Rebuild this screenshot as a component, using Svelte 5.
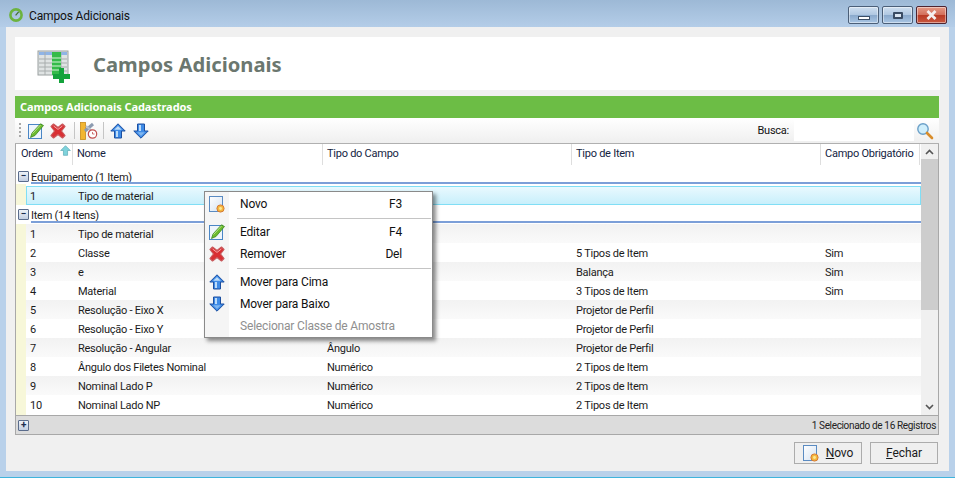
<script>
  const rows = [
    { n: 1, name: 'Tipo de material', campo: '', item: '', obr: '' },
    { n: 2, name: 'Classe', campo: '', item: '5 Tipos de Item', obr: 'Sim' },
    { n: 3, name: 'e', campo: '', item: 'Balança', obr: 'Sim' },
    { n: 4, name: 'Material', campo: '', item: '3 Tipos de Item', obr: 'Sim' },
    { n: 5, name: 'Resolução - Eixo X', campo: '', item: 'Projetor de Perfil', obr: '' },
    { n: 6, name: 'Resolução - Eixo Y', campo: '', item: 'Projetor de Perfil', obr: '' },
    { n: 7, name: 'Resolução - Angular', campo: 'Ângulo', item: 'Projetor de Perfil', obr: '' },
    { n: 8, name: 'Ângulo dos Filetes Nominal', campo: 'Numérico', item: '2 Tipos de Item', obr: '' },
    { n: 9, name: 'Nominal Lado P', campo: 'Numérico', item: '2 Tipos de Item', obr: '' },
    { n: 10, name: 'Nominal Lado NP', campo: 'Numérico', item: '2 Tipos de Item', obr: '' }
  ];
</script>

{#snippet pencil()}
  <svg width="16" height="16" viewBox="0 0 16 16">
    <rect x="0.5" y="1.5" width="13" height="14" fill="#eef5fc" stroke="#4a86c5"/>
    <path d="M2.5 14.5 L4 10 L12.5 0.8 L15.5 2.5 L7 12.5Z" fill="#6dbb2f" stroke="#2f7d17" stroke-width=".7"/>
    <path d="M4.5 10.5 L12.5 2" stroke="#b9e58c"/>
  </svg>
{/snippet}
{#snippet cross()}
  <svg width="16" height="16" viewBox="0 0 16 16">
    <path d="M3.5 1 L8 4.5 L12.5 1 L15 3.5 L11.5 8 L15 12.5 L12.5 15 L8 11.5 L3.5 15 L1 12.5 L4.5 8 L1 3.5Z" fill="#d92f33" stroke="#c9585b" stroke-width="1.2" stroke-linejoin="round"/>
    <path d="M3.6 3 L8 6.4 L12.4 3" fill="none" stroke="#f7b4b4" stroke-width=".9"/>
  </svg>
{/snippet}
{#snippet up()}
  <svg width="16" height="16" viewBox="0 0 16 16">
    <path d="M8 0.8 L15.2 8 L11.5 8 L11.5 15 L4.5 15 L4.5 8 L0.8 8Z" fill="#3f8be6" stroke="#1c4fa0" stroke-linejoin="round"/>
    <path d="M8 3 L11.8 6.8 L4.2 6.8Z" fill="#bcdcfa"/>
    <rect x="6" y="8" width="2" height="6" fill="#bcdcfa"/>
  </svg>
{/snippet}
{#snippet down()}
  <svg width="16" height="16" viewBox="0 0 16 16">
    <path d="M8 15.2 L15.2 8 L11.5 8 L11.5 1 L4.5 1 L4.5 8 L0.8 8Z" fill="#3f8be6" stroke="#1c4fa0" stroke-linejoin="round"/>
    <rect x="6" y="2" width="2" height="6" fill="#bcdcfa"/>
    <path d="M4.2 9.2 L11.8 9.2 L8 13Z" fill="#7fb6f0"/>
  </svg>
{/snippet}
{#snippet sunDoc()}
  <svg width="16" height="17" viewBox="0 0 16 17">
    <defs>
      <linearGradient id="docg" x1="0" y1="0" x2="1" y2="1"><stop offset="0" stop-color="#ffffff"/><stop offset="1" stop-color="#d4e2f2"/></linearGradient>
    </defs>
    <rect x="0.5" y="0.5" width="13" height="15" fill="url(#docg)" stroke="#5a8bc2"/>
    <circle cx="11.5" cy="12.5" r="3.6" fill="#f3b83e" stroke="#d87a33"/>
    <circle cx="11.5" cy="12.5" r="1.4" fill="#fde897"/>
  </svg>
{/snippet}

<div class="window">
  <header class="titlebar">
    <svg class="logo" width="14" height="14" viewBox="0 0 14 14">
      <circle cx="7" cy="7" r="5.6" fill="none" stroke="#6cb33f" stroke-width="2.6"/>
      <path d="M6.6 7.4 L9.6 3.8" stroke="#3f6e2a" stroke-width="1.2"/>
    </svg>
    <span class="wintitle">Campos Adicionais</span>
    <div class="winbtns">
      <div class="wb"><span class="min"></span></div>
      <div class="wb"><span class="max"></span></div>
      <div class="wb close">
        <svg width="13" height="10" viewBox="0 0 13 10"><path d="M2.5 1 L10.5 9 M10.5 1 L2.5 9" stroke="#f5efef" stroke-width="2.8"/></svg>
      </div>
    </div>
  </header>

  <div class="body">
    <section class="banner">
      <svg width="34" height="34" viewBox="0 0 34 34" class="bannericon">
        <rect x="1" y="1" width="30" height="24" fill="#dfe3e3" stroke="#9aa0a0"/>
        <rect x="2" y="2" width="28" height="3" fill="#8fb4e6"/>
        <path d="M2 9H30M2 13H30M2 17H30M2 21H30M8 2V25M24 2V25" stroke="#a8adad"/>
        <rect x="15" y="2" width="9" height="23" fill="#35bb4a"/>
        <path d="M15 8H24M15 12H24M15 16H24M15 20H24" stroke="#d6f2d8"/>
        <path d="M22 18H27V24H33V29H27V33H22V29H16V24H22Z" fill="#14a33c"/>
      </svg>
      <h1>Campos Adicionais</h1>
    </section>

    <section class="panel">
      <div class="ptitle">Campos Adicionais Cadastrados</div>
      <div class="toolbar">
        <span class="grip"></span>
        <span class="ic first">{@render pencil()}</span>
        <span class="ic">{@render cross()}</span>
        <span class="tsep"></span>
        <span class="ic tool">
          <svg width="18" height="18" viewBox="0 0 18 18">
            <rect x="0.5" y="0.5" width="5" height="17" fill="#f2b632" stroke="#c78a1a" stroke-width=".8"/>
            <path d="M5 9 L13 2" stroke="#8c9bb0" stroke-width="3"/>
            <path d="M6 4 L12 9" stroke="#b5c0cf" stroke-width="2"/>
            <circle cx="12.5" cy="12" r="4.2" fill="#fff" stroke="#c25050" stroke-width="1.2"/>
            <path d="M12.5 10V12H14.5" fill="none" stroke="#c25050" stroke-width=".8"/>
          </svg>
        </span>
        <span class="tsep second"></span>
        <span class="ic tool">{@render up()}</span>
        <span class="ic wide">{@render down()}</span>
        <span class="search">
          <label for="busca">Busca:</label>
          <input id="busca" type="text" />
          <svg width="18" height="18" viewBox="0 0 18 18">
            <circle cx="7" cy="7" r="5.2" fill="#cfeefb" stroke="#6a9fc8" stroke-width="1.4"/>
            <path d="M11 11 L16 16" stroke="#d98d2b" stroke-width="2.6" stroke-linecap="round"/>
          </svg>
        </span>
      </div>

      <div class="grid">
        <div class="gridmain">
          <div class="thead">
            <div class="c0">Ordem
              <svg class="sort" width="11" height="11" viewBox="0 0 16 16">
                <path d="M8 1 L15 8 L11 8 L11 15 L5 15 L5 8 L1 8Z" fill="#7fd3dc" stroke="#5aa9b5"/>
              </svg>
            </div>
            <div class="c1">Nome</div>
            <div class="c2">Tipo do Campo</div>
            <div class="c3">Tipo de Item</div>
            <div class="c4">Campo Obrigatório</div>
          </div>

          <div class="group g1">
            <span class="toggle">−</span><span class="gname">Equipamento (1 Item)</span>
          </div>
          <div class="row selected">
            <div class="num">1</div><div class="name">Tipo de material</div>
          </div>
          <div class="group g2">
            <span class="toggle">−</span><span class="gname">Item (14 Itens)</span>
          </div>
          {#each rows as r}
            <div class="row" class:alt={r.n % 2 === 1}>
              <div class="num">{r.n}</div>
              <div class="name">{r.name}</div>
              <div class="campo">{r.campo}</div>
              <div class="item">{r.item}</div>
              <div class="obr">{r.obr}</div>
            </div>
          {/each}
        </div>
        <div class="scroll">
          <div class="arrow"><svg width="9" height="6" viewBox="0 0 9 6"><path d="M1 5 L4.5 1.5 L8 5" fill="none" stroke="#555" stroke-width="1.6"/></svg></div>
          <div class="thumb"></div>
          <div class="arrow end"><svg width="9" height="6" viewBox="0 0 9 6"><path d="M1 1 L4.5 4.5 L8 1" fill="none" stroke="#555" stroke-width="1.6"/></svg></div>
        </div>
      </div>

      <div class="pfoot">
        <span class="toggle plus">+</span>
        <span class="count">1 Selecionado de 16 Registros</span>
      </div>
    </section>

    <div class="actions">
      <button class="btn">
        {@render sunDoc()}<span><u>N</u>ovo</span>
      </button>
      <button class="btn"><span><u>F</u>echar</span></button>
    </div>
  </div>

  <div class="menu">
    <div class="mi"><span class="mic">{@render sunDoc()}</span><span class="ml">Novo</span><span class="mk">F3</span></div>
    <div class="msep"></div>
    <div class="mi"><span class="mic">{@render pencil()}</span><span class="ml">Editar</span><span class="mk">F4</span></div>
    <div class="mi"><span class="mic">{@render cross()}</span><span class="ml">Remover</span><span class="mk">Del</span></div>
    <div class="msep"></div>
    <div class="mi"><span class="mic">{@render up()}</span><span class="ml">Mover para Cima</span></div>
    <div class="mi"><span class="mic">{@render down()}</span><span class="ml">Mover para Baixo</span></div>
    <div class="mi dis"><span class="mic"></span><span class="ml">Selecionar Classe de Amostra</span></div>
  </div>
</div>

<style>
  :global(body) { margin: 0; }
  .window {
    position: relative;
    width: 955px; height: 478px; box-sizing: border-box; overflow: hidden;
    display: flex; flex-direction: column;
    background: #b9d1ea;
    border-bottom: 1px solid #3fb4dc;
    font: 11px Roboto, "Noto Sans", sans-serif;
    letter-spacing: -.25px;
    color: #1b1b1b;
  }
  .titlebar {
    height: 27px; flex: none; display: flex; align-items: center; padding: 0 8px 0 9px;
    background: linear-gradient(#9db9d6, #b4cde8);
  }
  .logo { margin-right: 6px; margin-top: 2px; }
  .wintitle { font-size: 12px; letter-spacing: -.15px; color: #111; margin-top: 5px; }
  .winbtns { margin-left: auto; display: flex; gap: 3px; margin-top: 3px; }
  .wb {
    width: 29px; height: 16px; border: 1px solid #4b5f78; border-radius: 2px; display: flex; align-items: center; justify-content: center;
    background: linear-gradient(#cfdff0 0, #b0c8e2 48%, #8aa9cc 52%, #a9c6e4 100%);
    box-shadow: inset 0 0 0 1px rgba(255,255,255,.45);
  }
  .wb.close { background: linear-gradient(#e59a86 0, #d3705c 48%, #b93a25 52%, #c9583f 100%); border-color: #4e2430; }
  .min { width: 10px; height: 2px; background: #fff; border: 1px solid #3c4f66; margin-top: 6px; }
  .max { width: 6px; height: 3px; background: #dbe6f2; border: 2px solid #3a4c64; border-radius: 1px; }
  .body {
    flex: 1; margin: 0 6px 6px; background: #f0f0f0; padding: 10px 9px 7px;
    display: flex; flex-direction: column; min-height: 0;
  }
  .banner { height: 53px; flex: none; background: #fff; display: flex; align-items: center; }
  .bannericon { margin-left: 22px; margin-top: 6px; }
  h1 {
    margin: 0 0 0 22px; font: bold 20.2px "Noto Sans", "DejaVu Sans", sans-serif; letter-spacing: 0; color: #6b776f;
  }
  .panel { margin: 6px 1px 0 0; height: 339px; flex: none; display: flex; flex-direction: column; }
  .ptitle {
    height: 22px; flex: none; background: #6cbd45; color: #fff; font: bold 11px/21px "Noto Sans", sans-serif; letter-spacing: -.07px; padding-left: 5px;
  }
  .toolbar {
    height: 26px; flex: none; box-sizing: border-box; display: flex; align-items: center; padding-left: 4px;
    background: linear-gradient(#fff, #efefef); border-bottom: 1px solid #b0b0b0;
  }
  .grip { width: 2px; height: 16px; background-image: linear-gradient(#a9a9a9 50%, transparent 50%); background-size: 2px 4px; }
  .ic { display: flex; width: 22px; justify-content: center; align-items: center; }
  .ic.first { margin-left: 4px; }
  .ic.tool { width: 20px; margin-right: 0; }
  .ic.wide { width: 25px; }
  .tsep { width: 1px; height: 17px; background: #c5c5c5; margin: 0 4px 0 5px; }
  .tsep.second { margin-left: 4px; }
  .search { margin-left: auto; display: flex; align-items: center; height: 21px; margin-right: 5px; }
  .search label { color: #111; margin-right: 5px; }
  .search input { width: 120px; height: 21px; box-sizing: border-box; border: 0; background: #fff; padding: 0; outline: 0; margin-right: 2px; }
  .grid { flex: 1; min-height: 0; display: flex; border-left: 1px solid #a8a8a8; border-right: 1px solid #a8a8a8; background: #fff; }
  .gridmain {
    flex: 1; min-width: 0; overflow: hidden;
    background: linear-gradient(90deg, #f7f7d9 10px, #fff 10px);
  }
  .thead { display: flex; height: 21px; background: #fff; color: #14233f; line-height: 20px; }
  .thead > div { box-sizing: border-box; padding-left: 4px; border-right: 1px solid #dedede; height: 21px; position: relative; white-space: nowrap; }
  .c0 { width: 57px; padding-left: 4px; }
  .thead > .c0 { padding-left: 5px; }
  .c1 { width: 250px; }
  .c2 { width: 249px; }
  .c3 { width: 249px; }
  .c4 { width: 99px; }
  .sort { position: absolute; left: 44px; top: 1px; }
  .group { height: 19px; position: relative; background: #fff; display: flex; align-items: flex-start; box-sizing: border-box; }
  .g1 { padding-top: 6px; }
  .g2 { padding-top: 4px; }
  .gname { margin-left: 2px; line-height: 13px; color: #222; }
  .group::after { content: ""; position: absolute; left: 15px; right: 0; bottom: 1px; height: 2px; background: #7c9fd8; }
  .g1::after { bottom: 0; }
  .toggle {
    width: 9px; height: 9px; margin-left: 2px; box-sizing: content-box; border: 1px solid #5a6c8c; border-radius: 1px;
    background: linear-gradient(#eef2f8, #c3cfe2); font-size: 10px; line-height: 8px; text-align: center; color: #1c2e50; flex: none;
    font-weight: bold;
  }
  .row { height: 19px; display: flex; box-sizing: border-box; padding-top: 3px; line-height: 16px; margin-left: 10px; background: #fff; white-space: nowrap; }
  .row.alt { background: linear-gradient(#f2f2f2, #fafafa); }
  .num { width: 52px; padding-left: 4px; box-sizing: border-box; }
  .name { width: 249px; }
  .campo { width: 249px; }
  .item { width: 249px; }
  .row.selected {
    margin-top: 2px; padding-top: 2px;
    background: linear-gradient(#e9f9fe, #c8effb); border: 1px solid #80def5;
  }
  .row.selected .num { width: 51px; padding-left: 3px; }
  .scroll { width: 17px; flex: none; background: #f0f0f0; display: flex; flex-direction: column; }
  .arrow { height: 15px; flex: none; display: flex; align-items: center; justify-content: center; }
  .arrow.end { margin-top: auto; height: 17px; }
  .thumb { height: 151px; background: #cdcdcd; }
  .pfoot {
    height: 20px; flex: none; box-sizing: border-box; display: flex; align-items: center;
    background: #dcdcdc; border: 1px solid #a8a8a8; padding-right: 2px;
  }
  .plus { margin: 0 0 0 2px; }
  .count { margin-left: auto; font-size: 10px; letter-spacing: -.35px; color: #222; }
  .actions { display: flex; justify-content: flex-end; gap: 8px; margin: 7px 2px 0 0; }
  .btn {
    width: 68px; height: 22px; box-sizing: border-box; padding: 0; border: 1px solid #acacac; background: #efefef;
    font: 12px Roboto, "Noto Sans", sans-serif; letter-spacing: -.1px; color: #1b1b1b; display: flex; align-items: center; justify-content: center; gap: 7px;
  }
  .menu {
    position: absolute; left: 204px; top: 191px; width: 229px; height: 147px; box-sizing: border-box;
    background: linear-gradient(90deg, #f5f5f5 24px, #fff 24px); border: 1px solid #8a8a8a;
    box-shadow: 3px 3px 4px rgba(0,0,0,.45); padding-top: 1px; color: #111; font-size: 12px; letter-spacing: -.18px;
  }
  .mi { height: 22px; display: flex; align-items: center; }
  .mic { width: 24px; display: flex; justify-content: center; flex: none; margin-right: 11px; }
  .ml { flex: 1; }
  .mk { margin-right: 30px; }
  .msep { height: 1px; background: #c4c4c4; margin: 3px 1px 2px 32px; }
  .dis { color: #8f8f8f; }
</style>
